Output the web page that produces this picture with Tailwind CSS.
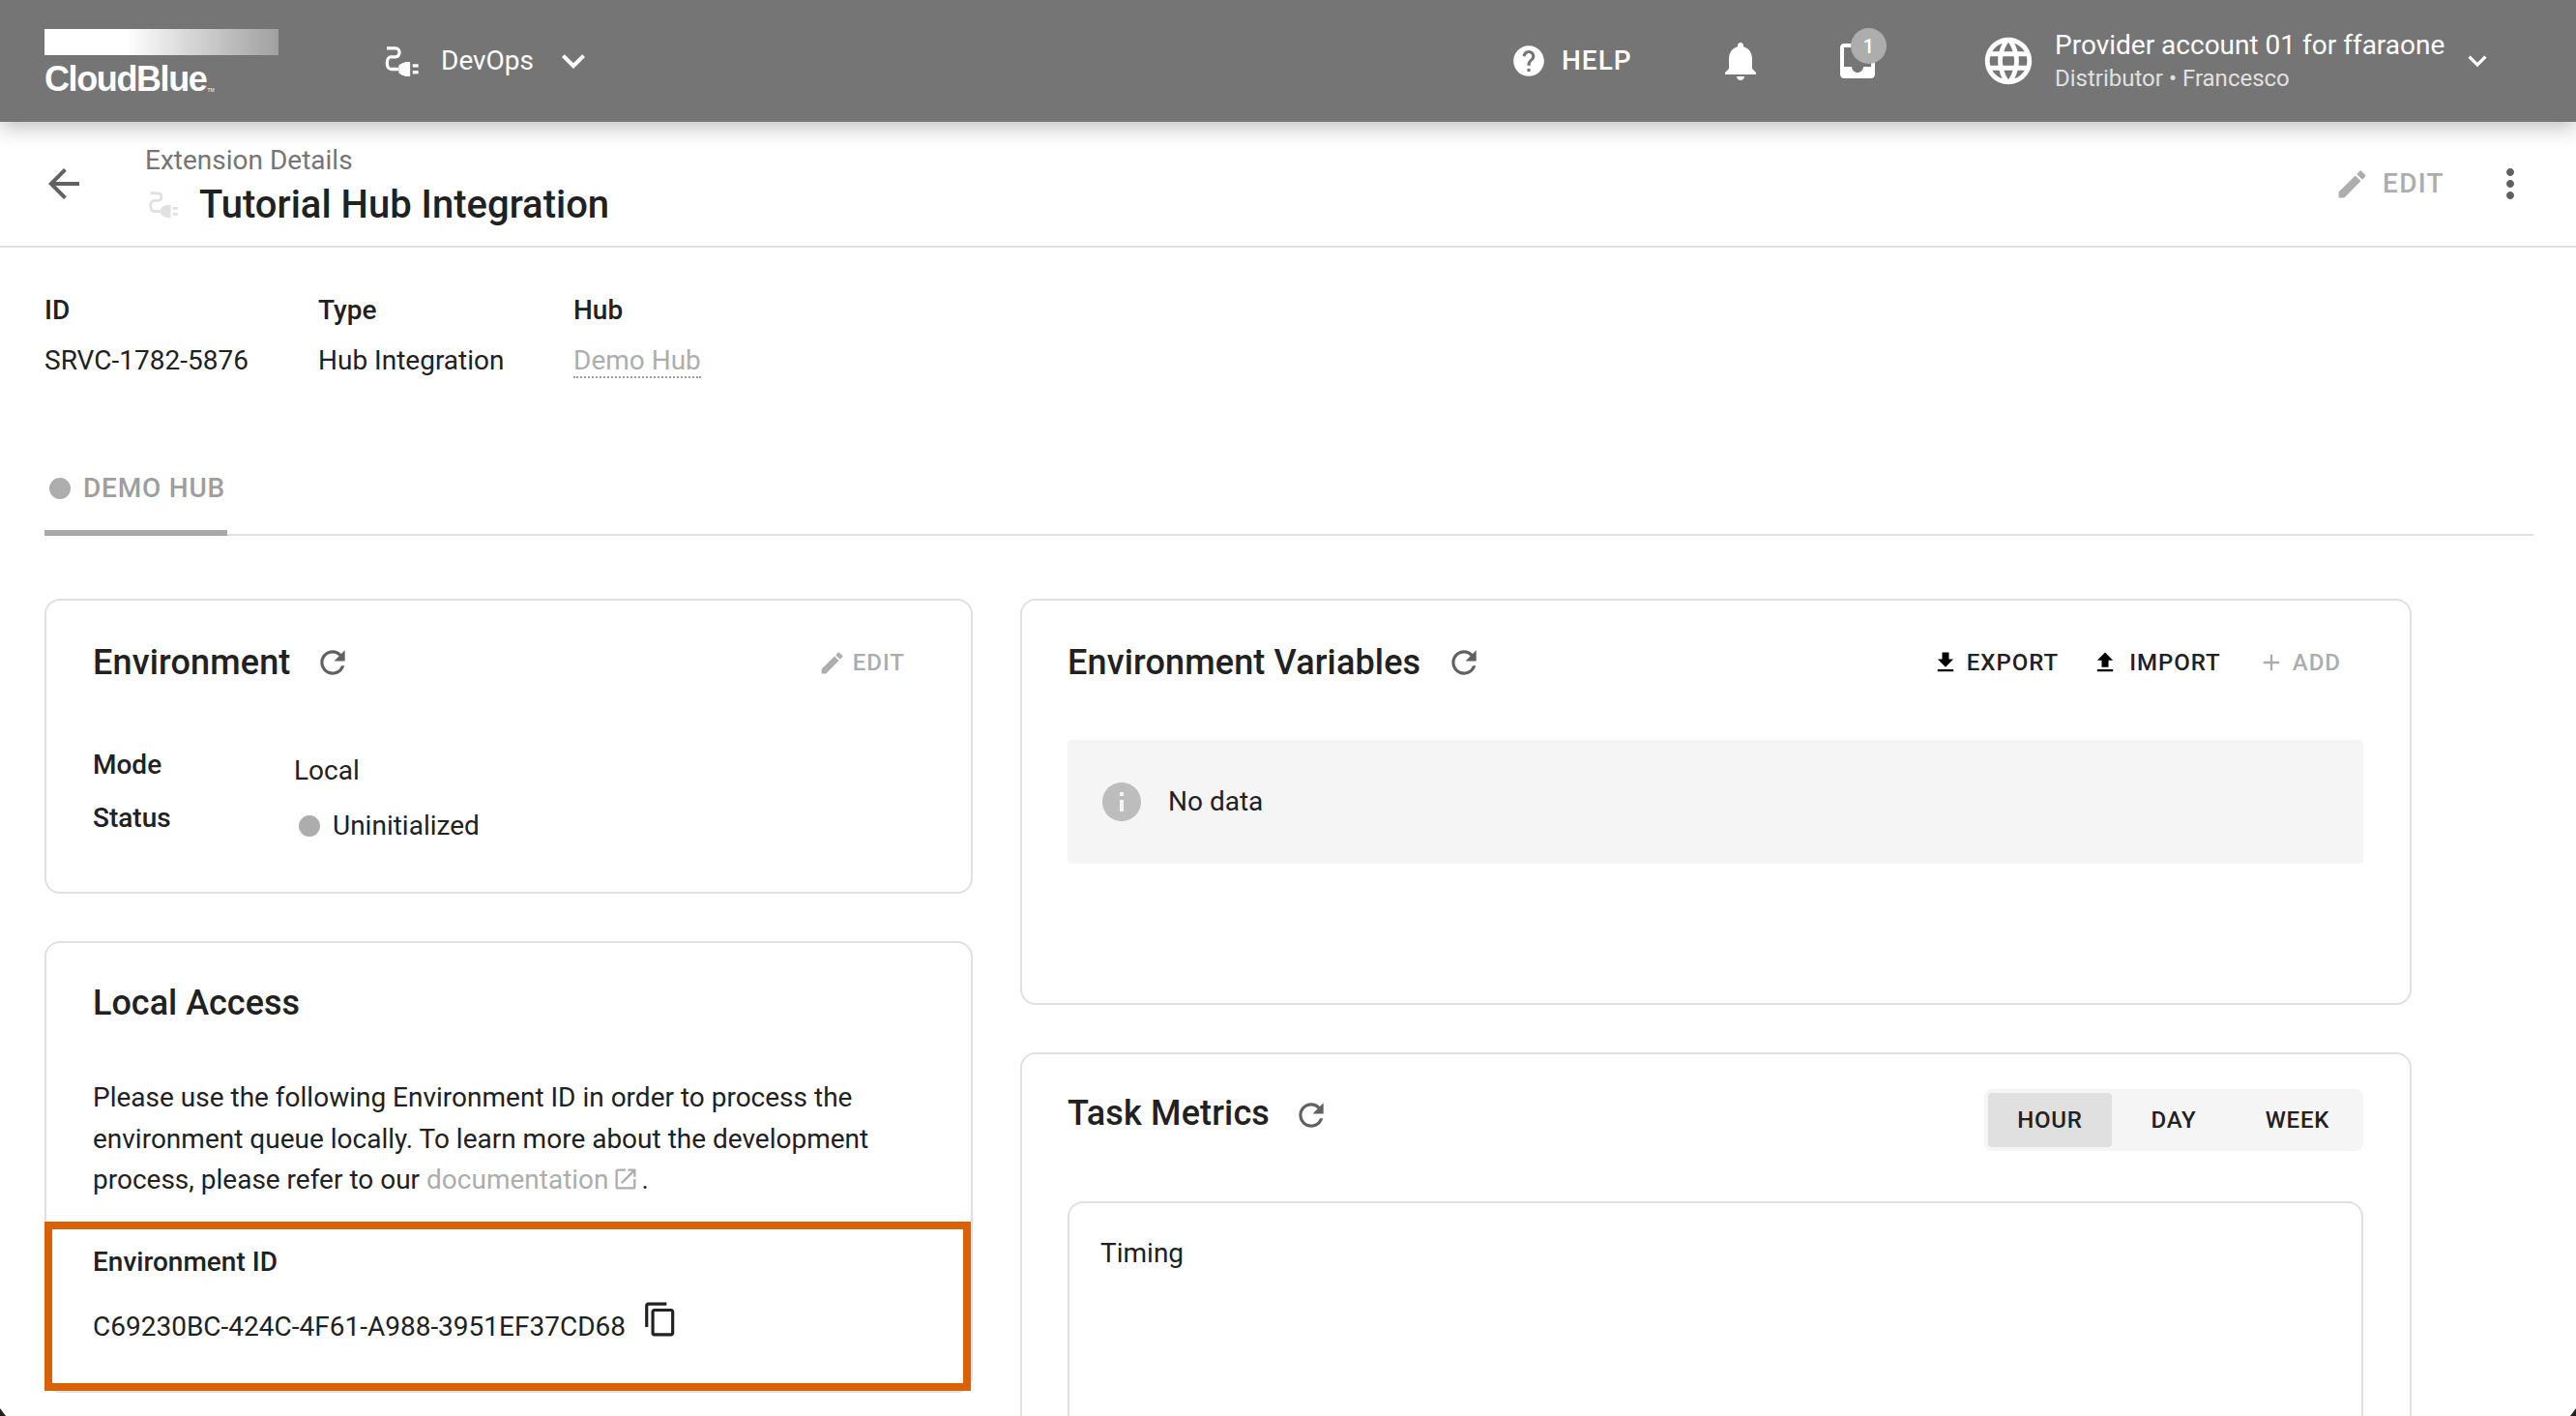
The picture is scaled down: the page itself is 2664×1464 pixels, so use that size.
<!doctype html>
<html lang="en">
  <head>
    <meta charset="UTF-8" />
    <meta name="viewport" content="width=device-width, initial-scale=1.0" />
    <title>Extension Details</title>
    <script src="https://cdn.jsdelivr.net/npm/@tailwindcss/browser@4"></script>
  </head>
  <body class="bg-white font-[Roboto,sans-serif] text-[#212121] text-[28px] leading-[40px]">
    <div class="relative h-[1464px] w-[2664px] overflow-hidden">
      <!-- Top bar -->
      <header class="relative z-10 flex h-[126px] items-center bg-[#757575] pl-[46px] pr-[83px] text-white shadow-[0_6px_20px_rgba(0,0,0,0.25)]">
        <div class="mt-[4px] w-[242px] shrink-0">
          <div class="h-[27px] w-[242px] bg-gradient-to-r from-white from-35% to-[#a0a0a0]"></div>
          <div class="mt-[7px] flex h-[36px] items-end font-['Liberation_Sans',sans-serif] text-[36px] leading-[36px] font-bold tracking-[-1.4px]">CloudBlue<span class="mb-[4px] ml-[1px] text-[5px] leading-[5px] font-normal tracking-normal">TM</span></div>
        </div>
        <svg class="ml-[110px] h-[31px] w-[35px] shrink-0" viewBox="85 78 105 95" fill="none">
          <path d="M90 84h28c16 0 16 27 0 27h-15c-16 0-16 39 0 39h25" stroke="white" stroke-width="10" />
          <path d="M128 138l12-8h6v-3h18v46h-18v-3h-6l-12-8z" fill="white" />
          <rect x="172" y="134" width="18" height="10" fill="white" />
          <rect x="172" y="155" width="18" height="10" fill="white" />
        </svg>
        <span class="ml-[23px]">DevOps</span>
        <svg class="ml-[17px] h-[48px] w-[48px] shrink-0" viewBox="0 0 24 24" fill="white"><path d="M7.41 8.59L12 13.17l4.59-4.58L18 10l-6 6-6-6 1.41-1.41z" /></svg>

        <div class="ml-auto flex items-center">
          <div class="flex w-[214px] items-center">
            <svg class="h-[38px] w-[38px] shrink-0" viewBox="0 0 24 24" fill="white"><path d="M12 2C6.48 2 2 6.48 2 12s4.48 10 10 10 10-4.48 10-10S17.52 2 12 2zm1 17h-2v-2h2v2zm2.07-7.75l-.9.92C13.45 12.9 13 13.5 13 15h-2v-.5c0-1.1.45-2.1 1.17-2.83l1.24-1.26c.37-.36.59-.86.59-1.41 0-1.1-.9-2-2-2s-2 .9-2 2H8c0-2.21 1.79-4 4-4s4 1.79 4 4c0 .88-.36 1.68-.93 2.25z" /></svg>
            <span class="ml-[15px] font-medium tracking-[1px]">HELP</span>
          </div>
          <div class="w-[121px]">
            <svg class="h-[48px] w-[48px]" viewBox="0 0 24 24" fill="white"><path d="M12 22c1.1 0 2-.9 2-2h-4c0 1.1.89 2 2 2zm6-6v-5c0-3.07-1.64-5.64-4.5-6.32V4c0-.83-.67-1.5-1.5-1.5s-1.5.67-1.5 1.5v.68C7.63 5.36 6 7.92 6 11v5l-2 2v1h16v-1l-2-2z" /></svg>
          </div>
          <div class="relative w-[151px]">
            <svg class="h-[48px] w-[48px]" viewBox="0 0 24 24" fill="white"><path d="M19 3H4.99c-1.11 0-1.98.89-1.98 2L3 19c0 1.1.88 2 1.99 2H19c1.1 0 2-.9 2-2V5c0-1.11-.9-2-2-2zm0 12h-4c0 1.66-1.35 3-3 3s-3-1.34-3-3H4.99V5H19v10z" /></svg>
            <span class="absolute left-[17px] top-[-10px] flex h-[37px] w-[37px] items-center justify-center rounded-full bg-[#adadad] text-[20px] leading-none font-medium text-white">1</span>
          </div>
          <svg class="h-[58px] w-[77px] shrink-0 pr-[19px]" viewBox="0 0 24 24" fill="white"><path d="M11.99 2C6.47 2 2 6.48 2 12s4.47 10 9.99 10C17.52 22 22 17.52 22 12S17.52 2 11.99 2zm6.93 6h-2.95c-.32-1.25-.78-2.45-1.38-3.56 1.84.63 3.37 1.91 4.33 3.56zM12 4.04c.83 1.2 1.48 2.53 1.91 3.96h-3.82c.43-1.43 1.08-2.76 1.91-3.96zM4.26 14C4.1 13.36 4 12.69 4 12s.1-1.36.26-2h3.38c-.08.66-.14 1.32-.14 2 0 .68.06 1.34.14 2H4.26zm.82 2h2.95c.32 1.25.78 2.45 1.38 3.56-1.84-.63-3.37-1.9-4.33-3.56zm2.95-8H5.08c.96-1.66 2.49-2.93 4.33-3.56C8.81 5.55 8.35 6.75 8.03 8zM12 19.96c-.83-1.2-1.48-2.53-1.91-3.96h3.82c-.43 1.43-1.08 2.76-1.91 3.96zM14.34 14H9.66c-.09-.66-.16-1.32-.16-2 0-.68.07-1.35.16-2h4.68c.09.65.16 1.32.16 2 0 .68-.07 1.34-.16 2zm.25 5.56c.6-1.11 1.06-2.31 1.38-3.56h2.95c-.96 1.65-2.49 2.93-4.33 3.56zM16.36 14c.08-.66.14-1.32.14-2 0-.68-.06-1.34-.14-2h3.38c.16.64.26 1.31.26 2s-.1 1.36-.26 2h-3.38z" /></svg>
          <div class="w-[418px]">
            <div class="-mt-[2px] h-[38px]">Provider account 01 for ffaraone</div>
            <div class="text-[24px] leading-[32px] text-[#e0e0e0]">Distributor • Francesco</div>
          </div>
          <svg class="h-[38px] w-[38px] shrink-0" viewBox="0 0 24 24" fill="white"><path d="M7.41 8.59L12 13.17l4.59-4.58L18 10l-6 6-6-6 1.41-1.41z" /></svg>
        </div>
      </header>

      <!-- Page title bar -->
      <div class="flex h-[130px] items-center border-b-2 border-[#e0e0e0] pl-[42px] pr-[44px]">
        <svg class="h-[48px] w-[48px] shrink-0" viewBox="0 0 24 24" fill="#616161"><path d="M20 11H7.83l5.59-5.59L12 4l-8 8 8 8 1.41-1.41L7.83 13H20v-2z" /></svg>
        <div class="ml-[60px] pt-[2px]">
          <div class="text-[#757575]">Extension Details</div>
          <div class="mt-[1px] flex h-[50px] items-center">
            <svg class="ml-[4px] h-[27px] w-[30px] shrink-0" viewBox="85 78 105 95" fill="none">
              <path d="M90 84h28c16 0 16 27 0 27h-15c-16 0-16 39 0 39h25" stroke="#e0e0e0" stroke-width="10" />
              <path d="M128 138l12-8h6v-3h18v46h-18v-3h-6l-12-8z" fill="#e0e0e0" />
              <rect x="172" y="134" width="18" height="10" fill="#e0e0e0" />
              <rect x="172" y="155" width="18" height="10" fill="#e0e0e0" />
            </svg>
            <span class="ml-[22px] text-[40px] leading-[50px] font-medium">Tutorial Hub Integration</span>
          </div>
        </div>
        <div class="ml-auto flex items-center">
          <svg class="h-[37px] w-[37px]" viewBox="0 0 24 24" fill="#adadad"><path d="M3 17.25V21h3.75L17.81 9.94l-3.75-3.75L3 17.25zM20.71 7.04c.39-.39.39-1.02 0-1.41l-2.34-2.34c-.39-.39-1.02-.39-1.41 0l-1.83 1.83 3.75 3.75 1.83-1.83z" /></svg>
          <span class="ml-[13px] font-medium tracking-[1.3px] text-[#adadad]">EDIT</span>
          <svg class="ml-[44px] h-[48px] w-[48px]" viewBox="0 0 24 24" fill="#616161"><path d="M12 8c1.1 0 2-.9 2-2s-.9-2-2-2-2 .9-2 2 .9 2 2 2zm0 2c-1.1 0-2 .9-2 2s.9 2 2 2 2-.9 2-2-.9-2-2-2zm0 6c-1.1 0-2 .9-2 2s.9 2 2 2 2-.9 2-2-.9-2-2-2z" /></svg>
        </div>
      </div>

      <!-- Extension info -->
      <div class="mt-[45px] flex pl-[46px]">
        <div class="w-[283px]">
          <div class="font-medium">ID</div>
          <div class="mt-[12px]">SRVC-1782-5876</div>
        </div>
        <div class="w-[264px]">
          <div class="font-medium">Type</div>
          <div class="mt-[12px]">Hub Integration</div>
        </div>
        <div>
          <div class="font-medium">Hub</div>
          <div class="mt-[12px] h-[38px] border-b-2 border-dotted border-[#9e9e9e] text-[#adadad]">Demo Hub</div>
        </div>
      </div>

      <!-- Tabs -->
      <div class="ml-[46px] mr-[44px] mt-[92px] border-b-2 border-[#e0e0e0]">
        <div class="-mb-[2px] flex w-[189px] items-center border-b-[6px] border-[#a8a8a8] pb-[23px] pl-[5px]">
          <span class="h-[22px] w-[22px] rounded-full bg-[#adadad]"></span>
          <span class="ml-[13px] font-medium tracking-[0.8px] text-[#9e9e9e]">DEMO HUB</span>
        </div>
      </div>

      <!-- Cards -->
      <div class="ml-[46px] mt-[65px] flex gap-[49px]">
        <div class="flex w-[960px] shrink-0 flex-col gap-[49px]">
          <section class="h-[305px] rounded-[16px] border-2 border-[#e0e0e0] pl-[48px] pr-[68px] pt-[39px]">
            <div class="flex h-[50px] items-center">
              <h2 class="text-[36px] leading-[50px] font-medium tracking-[0.15px]">Environment</h2>
              <svg class="ml-[25px] h-[38px] w-[38px]" viewBox="0 0 24 24" fill="#616161"><path d="M17.65 6.35C16.2 4.9 14.21 4 12 4c-4.42 0-7.99 3.58-7.99 8s3.57 8 7.99 8c3.73 0 6.84-2.55 7.73-6h-2.08c-.82 2.33-3.04 4-5.65 4-3.31 0-6-2.69-6-6s2.69-6 6-6c1.66 0 3.14.69 4.22 1.78L13 11h7V4l-2.35 2.35z" /></svg>
              <div class="ml-auto flex items-center text-[24px] font-medium tracking-[1px] text-[#adadad]">
                <svg class="h-[29px] w-[29px]" viewBox="0 0 24 24" fill="#adadad"><path d="M3 17.25V21h3.75L17.81 9.94l-3.75-3.75L3 17.25zM20.71 7.04c.39-.39.39-1.02 0-1.41l-2.34-2.34c-.39-.39-1.02-.39-1.41 0l-1.83 1.83 3.75 3.75 1.83-1.83z" /></svg>
                <span class="ml-[7px]">EDIT</span>
              </div>
            </div>
            <div class="mt-[61px] grid grid-cols-[208px_1fr] gap-y-[15px]">
              <div class="font-medium">Mode</div>
              <div class="mt-[6px] h-[34px]">Local</div>
              <div class="font-medium">Status</div>
              <div class="mt-[11px] flex h-[33px] items-center">
                <span class="ml-[5px] h-[22px] w-[22px] rounded-full bg-[#adadad]"></span>
                <span class="ml-[13px]">Uninitialized</span>
              </div>
            </div>
          </section>

          <section class="h-[467px] rounded-[16px] border-2 border-[#e0e0e0] pt-[37px]">
            <h2 class="pl-[48px] text-[36px] leading-[50px] font-medium">Local Access</h2>
            <p class="mt-[52px] pl-[48px] pr-[20px] leading-[42.5px]">
              Please use the following Environment ID in order to process the environment queue locally. To learn more about the development process, please refer to our
              <span class="text-[#adadad]">documentation</span><svg class="ml-[3px] inline h-[28px] w-[28px] align-[-4px]" viewBox="0 0 24 24" fill="#adadad"><path d="M19 19H5V5h7V3H5c-1.11 0-2 .9-2 2v14c0 1.1.89 2 2 2h14c1.1 0 2-.9 2-2v-7h-2v7zM14 3v2h3.59l-9.83 9.83 1.41 1.41L19 6.41V10h2V3h-7z" /></svg><span class="ml-[3px]">.</span>
            </p>
            <div class="-ml-[2px] mt-[21px] h-[175px] w-[958px] border-8 border-[#d96207] pl-[42px] pt-[14px]">
              <div class="font-medium">Environment ID</div>
              <div class="mt-[27px] flex h-[40px] items-center">
                <span>C69230BC-424C-4F61-A988-3951EF37CD68</span>
                <svg class="mb-[16px] ml-[17px] h-[38px] w-[38px]" viewBox="0 0 24 24" fill="#212121"><path d="M16 1H4c-1.1 0-2 .9-2 2v14h2V3h12V1zm3 4H8c-1.1 0-2 .9-2 2v14c0 1.1.9 2 2 2h11c1.1 0 2-.9 2-2V7c0-1.1-.9-2-2-2zm0 16H8V7h11v14z" /></svg>
              </div>
            </div>
          </section>
        </div>

        <div class="flex w-[1439px] shrink-0 flex-col gap-[49px]">
          <section class="h-[420px] rounded-[16px] border-2 border-[#e0e0e0] pl-[47px] pr-[48px] pt-[39px]">
            <div class="flex h-[50px] items-center">
              <h2 class="text-[36px] leading-[50px] font-medium tracking-[0.15px]">Environment Variables</h2>
              <svg class="ml-[26px] h-[38px] w-[38px]" viewBox="0 0 24 24" fill="#616161"><path d="M17.65 6.35C16.2 4.9 14.21 4 12 4c-4.42 0-7.99 3.58-7.99 8s3.57 8 7.99 8c3.73 0 6.84-2.55 7.73-6h-2.08c-.82 2.33-3.04 4-5.65 4-3.31 0-6-2.69-6-6s2.69-6 6-6c1.66 0 3.14.69 4.22 1.78L13 11h7V4l-2.35 2.35z" /></svg>
              <div class="ml-auto mr-[23px] flex items-center text-[24px] font-medium tracking-[1px]">
                <svg class="h-[28px] w-[28px]" viewBox="0 0 24 24" fill="#000"><path d="M19 9h-4V3H9v6H5l7 7 7-7zM5 18v2h14v-2H5z" /></svg>
                <span class="ml-[8px] text-[#212121]">EXPORT</span>
                <svg class="ml-[34px] h-[28px] w-[28px]" viewBox="0 0 24 24" fill="#000"><path d="M9 16h6v-6h4l-7-7-7 7h4zm-4 2h14v2H5z" /></svg>
                <span class="ml-[11px] text-[#212121]">IMPORT</span>
                <svg class="ml-[38px] h-[28px] w-[28px]" viewBox="0 0 24 24" fill="#adadad"><path d="M19 13h-6v6h-2v-6H5v-2h6V5h2v6h6v2z" /></svg>
                <span class="ml-[8px] text-[#adadad]">ADD</span>
              </div>
            </div>
            <div class="mt-[55px] flex h-[128px] items-center rounded-[4px] bg-[#f5f5f5] pl-[32px]">
              <svg class="h-[48px] w-[48px]" viewBox="0 0 24 24" fill="#bdbdbd"><path d="M12 2C6.48 2 2 6.48 2 12s4.48 10 10 10 10-4.48 10-10S17.52 2 12 2zm1 15h-2v-6h2v6zm0-8h-2V7h2v2z" /></svg>
              <span class="ml-[24px]">No data</span>
            </div>
          </section>

          <section class="h-[600px] rounded-[16px] border-2 border-[#e0e0e0] pl-[47px] pr-[48px] pt-[36px]">
            <div class="flex h-[64px] items-start">
              <h2 class="text-[36px] leading-[50px] font-medium tracking-[0.15px]">Task Metrics</h2>
              <svg class="ml-[24px] mt-[8px] h-[38px] w-[38px]" viewBox="0 0 24 24" fill="#616161"><path d="M17.65 6.35C16.2 4.9 14.21 4 12 4c-4.42 0-7.99 3.58-7.99 8s3.57 8 7.99 8c3.73 0 6.84-2.55 7.73-6h-2.08c-.82 2.33-3.04 4-5.65 4-3.31 0-6-2.69-6-6s2.69-6 6-6c1.66 0 3.14.69 4.22 1.78L13 11h7V4l-2.35 2.35z" /></svg>
              <div class="ml-auto flex h-[64px] w-[392px] items-center rounded-[8px] bg-[#f5f5f5] px-[4px] text-[24px] font-medium tracking-[0.8px]">
                <span class="flex h-[56px] w-[128px] items-center justify-center rounded-[4px] bg-[#e0e0e0]">HOUR</span>
                <span class="flex h-[56px] w-[128px] items-center justify-center">DAY</span>
                <span class="flex h-[56px] w-[128px] items-center justify-center">WEEK</span>
              </div>
            </div>
            <div class="mt-[52px] h-[400px] rounded-[16px] border-2 border-[#e0e0e0] pl-[32px] pt-[32px]">Timing</div>
          </section>
        </div>
      </div>

      <!-- Window corners -->
      <svg class="absolute bottom-0 left-0 h-[8px] w-[6px]" viewBox="0 0 6 8" fill="#212121"><path d="M0 0l6 8H0z" /></svg>
      <svg class="absolute bottom-0 right-0 h-[8px] w-[6px]" viewBox="0 0 6 8" fill="#212121"><path d="M6 0L0 8h6z" /></svg>
    </div>
  </body>
</html>
